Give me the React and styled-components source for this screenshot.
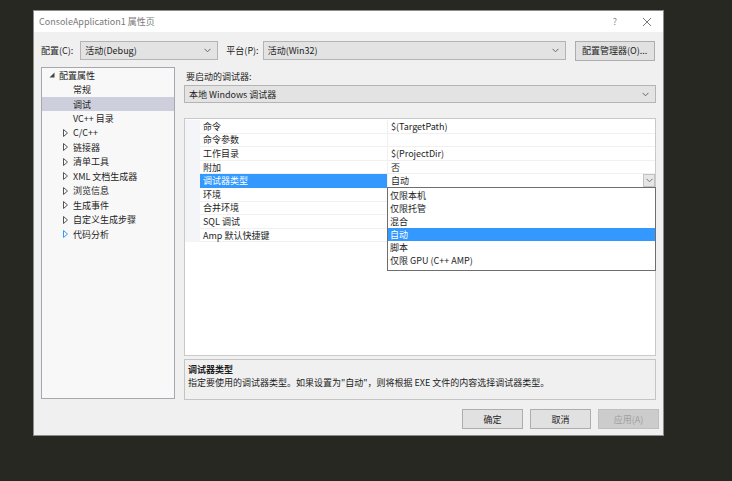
import React from 'react';
import styled, { createGlobalStyle } from 'styled-components';

const GlobalStyle = createGlobalStyle`
  html, body {
    margin: 0;
    background: #272822;
  }
  body {
    font-family: "Noto Sans CJK SC", "Noto Sans", sans-serif;
    font-size: 9px;
    line-height: 11px;
    color: #1e1e1e;
  }
`;

const treeItems = [
  { label: '配置属性', level: 0, toggle: 'open' },
  { label: '常规', level: 1 },
  { label: '调试', level: 1, selected: true },
  { label: 'VC++ 目录', level: 1 },
  { label: 'C/C++', level: 1, toggle: 'closed' },
  { label: '链接器', level: 1, toggle: 'closed' },
  { label: '清单工具', level: 1, toggle: 'closed' },
  { label: 'XML 文档生成器', level: 1, toggle: 'closed' },
  { label: '浏览信息', level: 1, toggle: 'closed' },
  { label: '生成事件', level: 1, toggle: 'closed' },
  { label: '自定义生成步骤', level: 1, toggle: 'closed' },
  { label: '代码分析', level: 1, toggle: 'closed', hot: true },
];

const properties = [
  { name: '命令', value: '$(TargetPath)' },
  { name: '命令参数', value: '' },
  { name: '工作目录', value: '$(ProjectDir)' },
  { name: '附加', value: '否' },
  { name: '调试器类型', value: '自动', selected: true },
  { name: '环境', value: '' },
  { name: '合并环境', value: '' },
  { name: 'SQL 调试', value: '' },
  { name: 'Amp 默认快捷键', value: '' },
];

const debuggerOptions = ['仅限本机', '仅限托管', '混合', '自动', '脚本', '仅限 GPU (C++ AMP)'];

const Styled = {
  Page: styled.div`
    padding: 10px 0 0 33px;
    height: 481px;
    box-sizing: border-box;
  `,
  Dialog: styled.div`
    width: 631px;
    height: 426px;
    box-sizing: border-box;
    background: #f0f0f0;
    border: 1px solid #8c8c8c;
    display: flex;
    flex-direction: column;
  `,
  TitleBar: styled.div`
    height: 21px;
    background: #fff;
    display: flex;
    align-items: center;
    padding: 0 0 0 5px;
    color: #7a7a7a;
  `,
  Title: styled.span`
    flex: 1;
  `,
  TitleButton: styled.span`
    width: 32px;
    display: flex;
    justify-content: center;
    align-items: center;
    color: #8a8a8a;
  `,
  Body: styled.div`
    flex: 1;
    display: flex;
    flex-direction: column;
    padding: 9px 7px 6px 6px;
    min-height: 0;
  `,
  TopRow: styled.div`
    display: flex;
    align-items: center;
    height: 19px;
  `,
  Label: styled.span`
    white-space: nowrap;
    margin-right: ${(p) => p.$gap || 4}px;
    margin-left: ${(p) => p.$lead || 0}px;
  `,
  Select: styled.div`
    box-sizing: border-box;
    height: ${(p) => p.$height || 19}px;
    width: ${(p) => (p.$width ? `${p.$width}px` : 'auto')};
    flex: ${(p) => (p.$width ? 'none' : 1)};
    background: #e3e3e3;
    border: 1px solid #b4b4b4;
    display: flex;
    align-items: center;
    padding: 0 6px 0 4px;
  `,
  SelectText: styled.span`
    flex: 1;
    white-space: nowrap;
  `,
  Button: styled.div`
    box-sizing: border-box;
    width: ${(p) => p.$width || 61}px;
    height: ${(p) => p.$height || 20}px;
    margin-left: ${(p) => p.$lead || 0}px;
    display: flex;
    align-items: center;
    justify-content: center;
    background: ${(p) => (p.$disabled ? '#cccccc' : '#e1e1e1')};
    border: 1px solid ${(p) => (p.$disabled ? '#bfbfbf' : '#adadad')};
    color: ${(p) => (p.$disabled ? '#a0a0a0' : '#1e1e1e')};
    white-space: nowrap;
  `,
  Main: styled.div`
    display: flex;
    gap: 9px;
    margin-top: 7px;
    flex: 1;
    min-height: 0;
  `,
  Tree: styled.div`
    box-sizing: border-box;
    width: 134px;
    margin-left: 1px;
    height: 332px;
    background: #f8f8f8;
    border: 1px solid #a7a7ae;
  `,
  TreeRow: styled.div`
    height: 14.45px;
    display: flex;
    align-items: center;
    background: ${(p) => (p.$selected ? '#cdd0dc' : 'transparent')};
    padding-left: ${(p) => (p.$level === 0 ? 7 : 21)}px;
    white-space: nowrap;
  `,
  Toggle: styled.span`
    width: 10px;
    display: flex;
    align-items: center;
    visibility: ${(p) => (p.$hidden ? 'hidden' : 'visible')};
  `,
  TreeLabel: styled.span``,
  Right: styled.div`
    flex: 1;
    display: flex;
    flex-direction: column;
  `,
  SectionLabel: styled.div`
    height: 18px;
    display: flex;
    align-items: center;
    padding-left: 2px;
  `,
  Grid: styled.div`
    box-sizing: border-box;
    margin-top: 15px;
    height: 238px;
    background: #fff;
    border: 1px solid #c9c9c9;
    padding-top: 1px;
  `,
  PropRow: styled.div`
    display: flex;
    height: 13.6px;
  `,
  Gutter: styled.div`
    width: 15px;
    background: #f3f5f9;
  `,
  PropName: styled.div`
    box-sizing: border-box;
    width: 187px;
    display: flex;
    align-items: center;
    padding-left: 3px;
    background: ${(p) => (p.$selected ? '#3399ff' : '#fff')};
    color: ${(p) => (p.$selected ? '#fff' : '#1e1e1e')};
    border-bottom: 1px solid ${(p) => (p.$selected ? '#3399ff' : '#f0f0f0')};
    white-space: nowrap;
  `,
  PropValue: styled.div`
    box-sizing: border-box;
    flex: 1;
    display: flex;
    align-items: center;
    padding-left: 3px;
    border-bottom: 1px solid #f0f0f0;
    border-left: 1px solid #f0f0f0;
    position: relative;
    white-space: nowrap;
  `,
  ValueText: styled.span`
    flex: 1;
  `,
  DropButton: styled.div`
    box-sizing: border-box;
    width: 12px;
    height: 13px;
    background: #e6e6e6;
    border: 1px solid #c2c2c2;
    display: flex;
    align-items: center;
    justify-content: center;
  `,
  DropList: styled.div`
    position: absolute;
    top: 13px;
    left: -1px;
    right: -1px;
    height: 84px;
    box-sizing: border-box;
    background: #fff;
    border: 1px solid #6e6e6e;
    z-index: 2;
    padding-top: 1px;
  `,
  DropItem: styled.div`
    height: 13px;
    display: flex;
    align-items: center;
    padding-left: 2px;
    background: ${(p) => (p.$selected ? '#3399ff' : 'transparent')};
    color: ${(p) => (p.$selected ? '#fff' : '#1e1e1e')};
  `,
  Description: styled.div`
    box-sizing: border-box;
    margin-top: 3px;
    height: 41px;
    border: 1px solid #c4c4c4;
    padding: 3px 3px;
    line-height: 13px;
  `,
  DescTitle: styled.div`
    font-weight: bold;
  `,
  Footer: styled.div`
    display: flex;
    justify-content: flex-end;
    gap: 7px;
    margin-top: 9px;
    margin-right: -3px;
  `,
};

function Chevron({ color = '#666' }) {
  return (
    <svg width="7" height="5" viewBox="0 0 7 5">
      <polyline points="0.5,0.8 3.5,3.8 6.5,0.8" fill="none" stroke={color} strokeWidth="1" />
    </svg>
  );
}

function TreeToggle({ type, hot }) {
  if (type === 'open') {
    return (
      <svg width="6" height="6" viewBox="0 0 6 6">
        <polygon points="5.5,0.5 5.5,5.5 0.5,5.5" fill="#444" />
      </svg>
    );
  }
  return (
    <svg width="5" height="8" viewBox="0 0 5 8">
      <polygon points="0.5,0.5 4.5,4 0.5,7.5" fill="none" stroke={hot ? '#3399ff' : '#555'} strokeWidth="1" />
    </svg>
  );
}

function CloseIcon() {
  return (
    <svg width="10" height="10" viewBox="0 0 10 10">
      <path d="M1 1 L9 9 M9 1 L1 9" stroke="#777" strokeWidth="1" />
    </svg>
  );
}

function App() {
  return (
    <Styled.Page>
      <GlobalStyle />
      <Styled.Dialog>
        <Styled.TitleBar>
          <Styled.Title>ConsoleApplication1 属性页</Styled.Title>
          <Styled.TitleButton>?</Styled.TitleButton>
          <Styled.TitleButton>
            <CloseIcon />
          </Styled.TitleButton>
        </Styled.TitleBar>
        <Styled.Body>
          <Styled.TopRow>
            <Styled.Label $lead={1} $gap={7}>配置(C):</Styled.Label>
            <Styled.Select $width={138}>
              <Styled.SelectText>活动(Debug)</Styled.SelectText>
              <Chevron />
            </Styled.Select>
            <Styled.Label $lead={8}>平台(P):</Styled.Label>
            <Styled.Select $width={303}>
              <Styled.SelectText>活动(Win32)</Styled.SelectText>
              <Chevron />
            </Styled.Select>
            <Styled.Button $width={80} $lead={9}>配置管理器(O)...</Styled.Button>
          </Styled.TopRow>

          <Styled.Main>
            <Styled.Tree>
              {treeItems.map((item) => (
                <Styled.TreeRow key={item.label} $level={item.level} $selected={item.selected}>
                  <Styled.Toggle $hidden={!item.toggle}>
                    {item.toggle && <TreeToggle type={item.toggle} hot={item.hot} />}
                  </Styled.Toggle>
                  <Styled.TreeLabel>{item.label}</Styled.TreeLabel>
                </Styled.TreeRow>
              ))}
            </Styled.Tree>

            <Styled.Right>
              <Styled.SectionLabel>要启动的调试器:</Styled.SectionLabel>
              <Styled.Select $height={18}>
                <Styled.SelectText>本地 Windows 调试器</Styled.SelectText>
                <Chevron />
              </Styled.Select>

              <Styled.Grid>
                {properties.map((prop) => (
                  <Styled.PropRow key={prop.name}>
                    <Styled.Gutter />
                    <Styled.PropName $selected={prop.selected}>{prop.name}</Styled.PropName>
                    <Styled.PropValue>
                      <Styled.ValueText>{prop.value}</Styled.ValueText>
                      {prop.selected && (
                        <>
                          <Styled.DropButton>
                            <Chevron color="#777" />
                          </Styled.DropButton>
                          <Styled.DropList>
                            {debuggerOptions.map((opt) => (
                              <Styled.DropItem key={opt} $selected={opt === prop.value}>
                                {opt}
                              </Styled.DropItem>
                            ))}
                          </Styled.DropList>
                        </>
                      )}
                    </Styled.PropValue>
                  </Styled.PropRow>
                ))}
              </Styled.Grid>

              <Styled.Description>
                <Styled.DescTitle>调试器类型</Styled.DescTitle>
                <div>指定要使用的调试器类型。如果设置为"自动"，则将根据 EXE 文件的内容选择调试器类型。</div>
              </Styled.Description>
            </Styled.Right>
          </Styled.Main>

          <Styled.Footer>
            <Styled.Button>确定</Styled.Button>
            <Styled.Button>取消</Styled.Button>
            <Styled.Button $disabled>应用(A)</Styled.Button>
          </Styled.Footer>
        </Styled.Body>
      </Styled.Dialog>
    </Styled.Page>
  );
}

export default App;
